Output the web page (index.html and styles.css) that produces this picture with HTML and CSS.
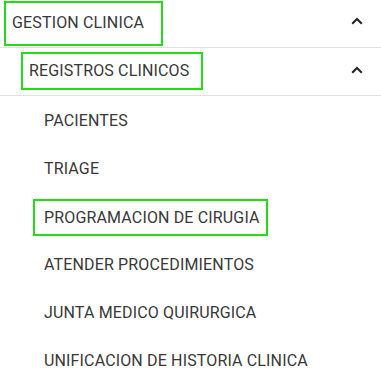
FILE: index.html
```html
<!DOCTYPE html>
<html lang="es">
<head>
<meta charset="utf-8">
<title>Menu</title>
<link rel="stylesheet" href="styles.css">
</head>
<body>
<nav class="menu">
  <div class="row level1">
    <span class="label hl hl-1">GESTION CLINICA</span>
    <svg class="chev" viewBox="0 0 12 8" width="12" height="8"><polyline points="1.2,6.8 6,2 10.8,6.8" fill="none" stroke="#222" stroke-width="2"/></svg>
  </div>
  <div class="row level2">
    <span class="label hl hl-2">REGISTROS CLINICOS</span>
    <svg class="chev" viewBox="0 0 12 8" width="12" height="8"><polyline points="1.2,6.8 6,2 10.8,6.8" fill="none" stroke="#222" stroke-width="2"/></svg>
  </div>
  <ul class="items">
    <li class="item"><span class="label">PACIENTES</span></li>
    <li class="item"><span class="label">TRIAGE</span></li>
    <li class="item"><span class="label hl hl-3">PROGRAMACION DE CIRUGIA</span></li>
    <li class="item"><span class="label">ATENDER PROCEDIMIENTOS</span></li>
    <li class="item"><span class="label">JUNTA MEDICO QUIRURGICA</span></li>
    <li class="item"><span class="label">UNIFICACION DE HISTORIA CLINICA</span></li>
  </ul>
</nav>
</body>
</html>
```
FILE: styles.css
```css
html, body {
  margin: 0;
  padding: 0;
  background: #ffffff;
}

body {
  font-family: Roboto, "Liberation Sans", sans-serif;
  font-size: 16px;
  letter-spacing: 0.15px;
  color: #383838;
}

.menu {
  width: 381px;
}

.row {
  display: flex;
  align-items: flex-start;
  justify-content: space-between;
  height: 47px;
  border-bottom: 1px solid #e2e2e2;
  box-sizing: content-box;
}

.label {
  display: inline-flex;
  align-items: center;
  white-space: nowrap;
  box-sizing: border-box;
}

.hl {
  border: 2px solid #22dd11;
}

.hl-1 {
  margin-left: 4px;
  margin-top: 1px;
  height: 45px;
  width: 159px;
  padding: 0 0 3px 6px;
}

.hl-2 {
  margin-left: 21px;
  margin-top: 4px;
  height: 38px;
  width: 182px;
  padding: 0 0 1px 6px;
}

.chev {
  margin-right: 18px;
  flex: none;
}

.level1 .chev {
  margin-top: 17px;
}

.level2 .chev {
  margin-top: 18px;
}

.items {
  list-style: none;
  margin: 0;
  padding: 0;
}

.item {
  height: 48px;
  display: flex;
  align-items: center;
  padding-left: 44px;
}

.hl-3 {
  margin-left: -11px;
  margin-top: 3px;
  height: 37px;
  width: 235px;
  padding: 0 0 1px 9px;
}
```
